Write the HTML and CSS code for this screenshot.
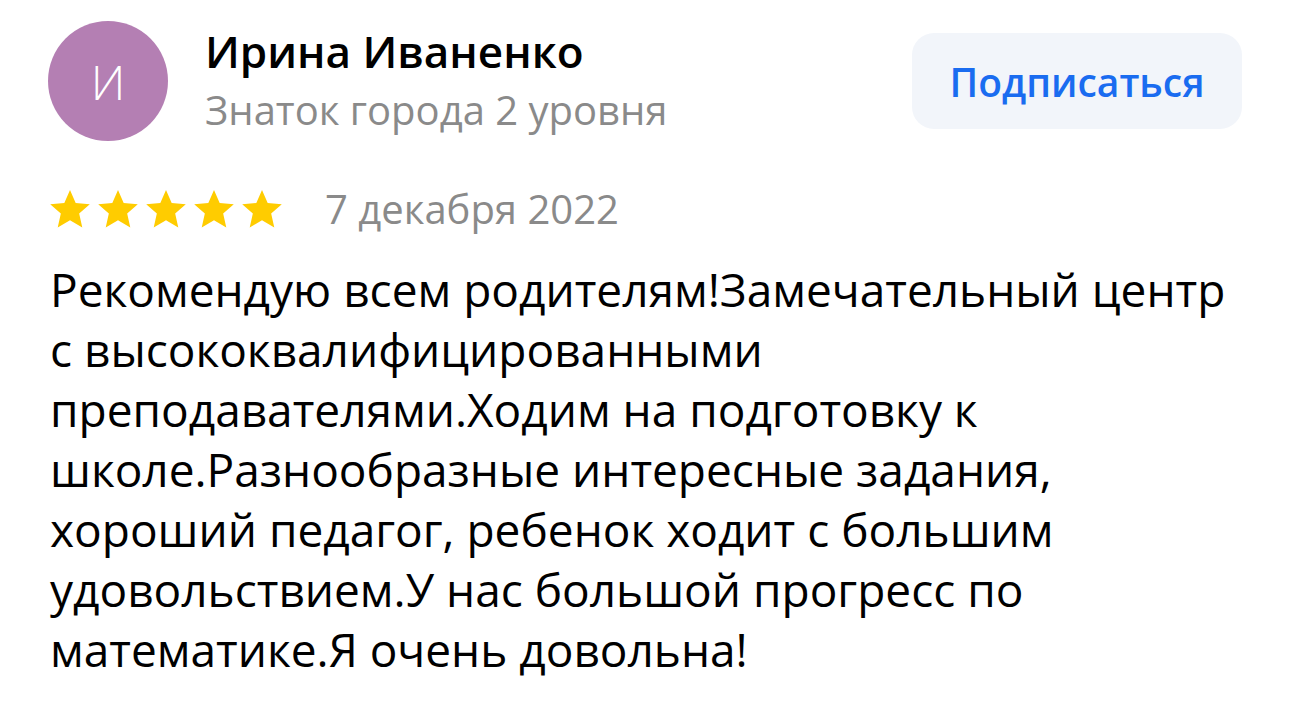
FILE: index.html
```html
<!DOCTYPE html>
<html lang="ru">
<head>
<meta charset="utf-8">
<link rel="stylesheet" href="styles.css">
</head>
<body>
<div class="review">
  <div class="header">
    <div class="avatar">И</div>
    <div class="author">
      <div class="name">Ирина Иваненко</div>
      <div class="level">Знаток города 2 уровня</div>
    </div>
    <button class="subscribe">Подписаться</button>
  </div>
  <div class="meta">
    <div class="stars">
      <svg class="star" viewBox="0 0 24 24"><path d="M12 1.6l3.1 7.1 7.7.7-5.8 5.1 1.7 7.6L12 18.1l-6.7 4 1.7-7.6L1.2 9.4l7.7-.7z"/></svg>
      <svg class="star" viewBox="0 0 24 24"><path d="M12 1.6l3.1 7.1 7.7.7-5.8 5.1 1.7 7.6L12 18.1l-6.7 4 1.7-7.6L1.2 9.4l7.7-.7z"/></svg>
      <svg class="star" viewBox="0 0 24 24"><path d="M12 1.6l3.1 7.1 7.7.7-5.8 5.1 1.7 7.6L12 18.1l-6.7 4 1.7-7.6L1.2 9.4l7.7-.7z"/></svg>
      <svg class="star" viewBox="0 0 24 24"><path d="M12 1.6l3.1 7.1 7.7.7-5.8 5.1 1.7 7.6L12 18.1l-6.7 4 1.7-7.6L1.2 9.4l7.7-.7z"/></svg>
      <svg class="star" viewBox="0 0 24 24"><path d="M12 1.6l3.1 7.1 7.7.7-5.8 5.1 1.7 7.6L12 18.1l-6.7 4 1.7-7.6L1.2 9.4l7.7-.7z"/></svg>
    </div>
    <div class="date">7 декабря 2022</div>
  </div>
  <p class="text">Рекомендую всем родителям!Замечательный центр с высококвалифицированными преподавателями.Ходим на подготовку к школе.Разнообразные интересные задания, хороший педагог, ребенок ходит с большим удовольствием.У нас большой прогресс по математике.Я очень довольна!</p>
</div>
</body>
</html>
```

FILE: styles.css
```css
html, body {
  margin: 0;
  padding: 0;
  background: #ffffff;
}
body {
  font-family: "Open Sans", "Noto Sans", sans-serif;
  color: #000;
}
.review {
  padding: 21px 48px 0 48px;
  width: 1194px;
}
.header {
  display: flex;
  align-items: flex-start;
}
.avatar {
  width: 120px;
  height: 120px;
  border-radius: 50%;
  background: #b47fb3;
  color: #fff;
  font-size: 48px;
  font-weight: 300;
  display: flex;
  align-items: center;
  justify-content: center;
  flex: none;
}
.author {
  margin-left: 37px;
  margin-top: 0;
  flex: 1;
}
.name {
  font-size: 44px;
  font-weight: 600;
  line-height: 60px;
}
.level {
  font-size: 40px;
  color: #8a8a8a;
  line-height: 58px;
}
.subscribe {
  margin-top: 12px;
  width: 330px;
  height: 96px;
  border: none;
  border-radius: 22px;
  background: #f2f5fa;
  color: #1a6cf0;
  font-family: inherit;
  font-size: 39px;
  font-weight: 600;
  padding: 0;
}
.meta {
  display: flex;
  align-items: center;
  margin-top: 44px;
}
.stars {
  display: flex;
  gap: 4px;
}
.star {
  width: 44px;
  height: 44px;
  fill: #fc0;
}
.date {
  margin-left: 41px;
  font-size: 40px;
  color: #8a8a8a;
  line-height: 48px;
}
.text {
  margin: 26px 0 0 2px;
  font-size: 46px;
  line-height: 60px;
}
```
